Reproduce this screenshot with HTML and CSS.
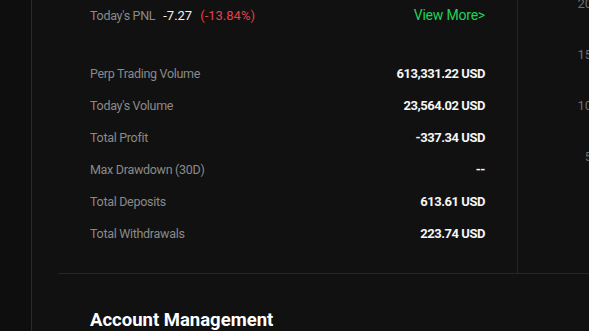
FILE: index.html
```html
<!DOCTYPE html>
<html lang="en">
<head>
    <meta charset="UTF-8">
    <meta name="viewport" content="width=device-width, initial-scale=1.0">
    <title>Assets Overview</title>
    <link rel="stylesheet" href="styles.css">
</head>
<body>
    <div class="sidebar"></div>
    <div class="main">
        <div class="overview">
            <div class="stats">
                <div class="pnl-row">
                    <div class="pnl">
                        <span class="label">Today's PNL</span>
                        <span class="pnl-value">-7.27</span>
                        <span class="pnl-rate">(-13.84%)</span>
                    </div>
                    <a href="#" class="view-more">View More&gt;</a>
                </div>
                <div class="stat-list">
                    <div class="stat-row">
                        <span class="label">Perp Trading Volume</span>
                        <span class="value">613,331.22 USD</span>
                    </div>
                    <div class="stat-row">
                        <span class="label">Today's Volume</span>
                        <span class="value">23,564.02 USD</span>
                    </div>
                    <div class="stat-row">
                        <span class="label">Total Profit</span>
                        <span class="value">-337.34 USD</span>
                    </div>
                    <div class="stat-row">
                        <span class="label">Max Drawdown (30D)</span>
                        <span class="value">--</span>
                    </div>
                    <div class="stat-row">
                        <span class="label">Total Deposits</span>
                        <span class="value">613.61 USD</span>
                    </div>
                    <div class="stat-row">
                        <span class="label">Total Withdrawals</span>
                        <span class="value">223.74 USD</span>
                    </div>
                </div>
            </div>
            <div class="chart">
                <div class="axis">
                    <span>20</span>
                    <span>15</span>
                    <span>10</span>
                    <span>5</span>
                </div>
            </div>
        </div>
        <div class="account">
            <h2>Account Management</h2>
        </div>
    </div>
</body>
</html>
```

FILE: styles.css
```css
body {
    font-family: Roboto, "Noto Sans", sans-serif;
    background-color: #111111;
    color: #ffffff;
    margin: 0;
    padding: 0;
    display: flex;
    height: 100vh;
    overflow: hidden;
}

.sidebar {
    width: 31px;
    flex-shrink: 0;
    background-color: #0e0e0e;
    border-right: 1px solid #2a2a2a;
}

.main {
    flex: 1;
    display: flex;
    flex-direction: column;
}

.overview {
    display: flex;
    margin-left: 26px;
    border-bottom: 1px solid #262626;
}

.stats {
    width: 395px;
    padding: 5px 32px 24px 32px;
    border-right: 1px solid #262626;
}

.pnl-row {
    display: flex;
    justify-content: space-between;
    align-items: center;
    height: 20px;
    margin-bottom: 32px;
}

.pnl {
    display: flex;
    gap: 8px;
    align-items: center;
}

.label {
    font-size: 12.5px;
    letter-spacing: -0.3px;
    color: #8a8a8a;
}

.pnl-value {
    font-size: 13px;
    color: #f2f2f2;
}

.pnl-rate {
    font-size: 13px;
    color: #e5404a;
}

.view-more {
    font-size: 14px;
    letter-spacing: -0.2px;
    color: #1fd159;
    text-decoration: none;
}

.stat-list {
    display: flex;
    flex-direction: column;
}

.stat-row {
    display: flex;
    justify-content: space-between;
    align-items: center;
    height: 32px;
}

.value {
    font-size: 13px;
    font-weight: bold;
    letter-spacing: -0.45px;
    color: #f5f5f5;
}

.chart {
    flex: 1;
    overflow: hidden;
}

.axis {
    display: flex;
    flex-direction: column;
    align-items: flex-end;
    width: 74px;
    margin-top: -4px;
    font-size: 13px;
    color: #6e6e6e;
}

.axis span {
    height: 51px;
    line-height: 16px;
}

.account {
    padding: 35px 0 0 58px;
}

h2 {
    margin: 0;
    font-size: 18.5px;
    font-weight: bold;
    color: #ffffff;
}
```
